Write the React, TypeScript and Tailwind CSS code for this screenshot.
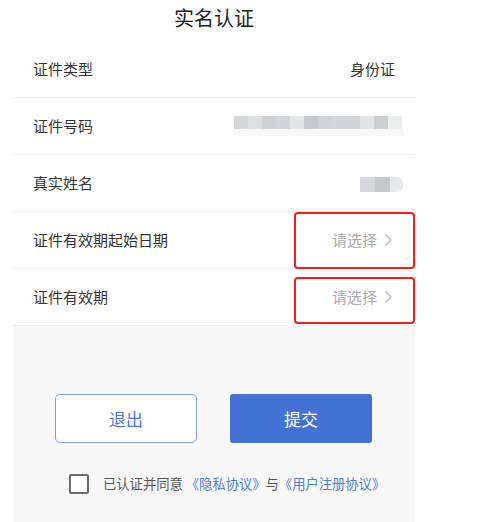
import React from "react";

const font = { fontFamily: '"Noto Sans CJK SC", "Noto Sans", sans-serif' };

function Chevron() {
  return (
    <svg width="9" height="14" viewBox="0 0 9 14" className="ml-[7px]">
      <polyline points="1.5,1.5 7,7 1.5,12.5" fill="none" stroke="#b5b5b5" strokeWidth="1.3" />
    </svg>
  );
}

const idBlocks = ["#d6d7db", "#dedfe2", "#d0d1d6", "#d3d4d9", "#e4e5e8", "#c9cad0", "#d2d3d8", "#d5d6db", "#d4d5da", "#e2e3e6", "#ccced3", "#eceded"];

export default function App() {
  return (
    <div className="w-[479px] h-[522px] bg-white overflow-hidden" style={font}>
      <div className="ml-[13px] w-[402px] h-[522px] bg-[#f8f8f9] flex flex-col">
        <div className="bg-white h-[41px] flex items-center justify-center text-[20px] text-[#222] pb-[5px]">实名认证</div>
        <div className="bg-white">
          <div className="h-[57px] border-b border-[#eeeeee] flex items-center justify-between pl-[20px] pr-[20px] text-[15px] text-[#333]">
            <span>证件类型</span>
            <span>身份证</span>
          </div>
          <div className="h-[57px] border-b border-[#eeeeee] flex items-center justify-between pl-[20px] pr-[11px] text-[15px] text-[#333]">
            <span>证件号码</span>
            <div className="flex flex-col">
              <div className="flex h-[13px]">
                {idBlocks.map((c, i) => (
                  <div key={i} className="w-[14px] h-full" style={{ background: c }} />
                ))}
              </div>
              <div className="h-[7px] w-[170px] bg-[#f7f7f8]" />
            </div>
          </div>
          <div className="h-[57px] border-b border-[#eeeeee] flex items-center justify-between pl-[20px] pr-[12px] text-[15px] text-[#333]">
            <span>真实姓名</span>
            <div className="flex h-[15px] mt-[2px]">
              <div className="w-[15px] h-full bg-[#d7d8dc]" />
              <div className="w-[15px] h-full bg-[#c6c8ce]" />
              <div className="w-[13px] h-full bg-[#e7e8eb] rounded-r-[6px]" />
            </div>
          </div>
          <div className="relative h-[57px] border-b border-[#eeeeee] flex items-center justify-between pl-[20px] pr-[22px] text-[15px] text-[#333]">
            <span>证件有效期起始日期</span>
            <span className="flex items-center text-[#aaaaaa]">请选择<Chevron /></span>
            <div className="absolute right-0 top-0 w-[121px] h-[57px] border-[2.5px] border-[#f0201a] rounded-[4px]" />
          </div>
          <div className="relative h-[57px] border-b border-[#eeeeee] flex items-center justify-between pl-[20px] pr-[22px] text-[15px] text-[#333]">
            <span>证件有效期</span>
            <span className="flex items-center text-[#aaaaaa]">请选择<Chevron /></span>
            <div className="absolute right-0 top-[8px] w-[121px] h-[47px] border-[2.5px] border-[#f0201a] rounded-[4px]" />
          </div>
        </div>
        <div className="flex justify-center gap-[33px] mt-[68px] pr-[1px]">
          <button className="w-[142px] h-[49px] border border-[#7d9fe0] rounded-[5px] bg-white text-[#4b79d5] text-[17px]" style={font}>退出</button>
          <button className="w-[142px] h-[49px] rounded-[3px] bg-[#4471d5] text-white text-[17px]" style={font}>提交</button>
        </div>
        <div className="flex items-center mt-[31px] pl-[56px]">
          <div className="w-[20px] h-[20px] border-[2px] border-[#6b6b6b] rounded-[2px] bg-white" />
          <div className="ml-[14px] text-[13.3px] text-[#555]">
            已认证并同意<span className="text-[#4a80d8]"> 《隐私协议》</span>与<span className="text-[#4a80d8]">《用户注册协议》</span>
          </div>
        </div>
      </div>
    </div>
  );
}
